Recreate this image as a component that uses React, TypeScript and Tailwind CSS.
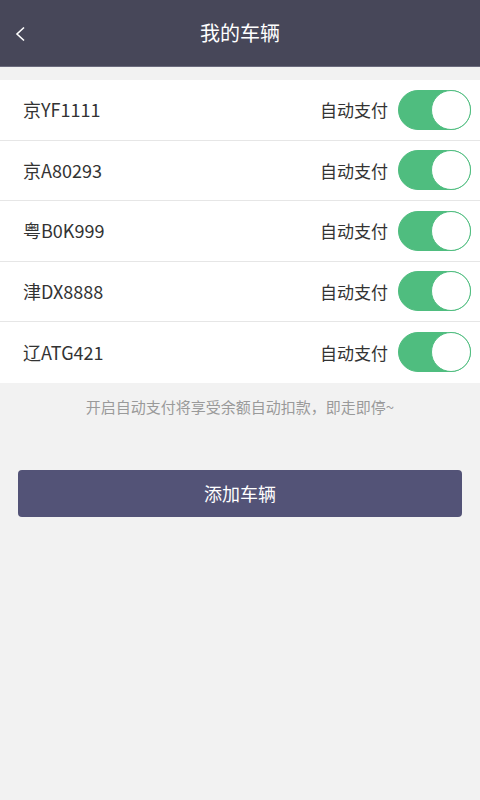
import { useState } from "react";

const plates = ["京YF1111", "京A80293", "粤B0K999", "津DX8888", "辽ATG421"];

const font = {
  fontFamily: '"Noto Sans CJK SC", "Noto Sans", Roboto, sans-serif',
};

const Toggle = ({ on, onClick }: { on: boolean; onClick: () => void }) => (
  <button
    onClick={onClick}
    className={
      "relative w-[73px] h-[40px] rounded-full border " +
      (on ? "bg-[#4fbd7f] border-[#4fbd7f]" : "bg-white border-[#e0e0e0]")
    }
  >
    <span
      className={
        "absolute top-[-1px] w-[40px] h-[40px] rounded-full bg-white border " +
        (on ? "right-[-1px] border-[#4fbd7f]" : "left-[-1px] border-[#e0e0e0]")
      }
    />
  </button>
);

export default function App() {
  const [enabled, setEnabled] = useState(plates.map(() => true));

  return (
    <div className="w-[480px] h-[800px] bg-[#f2f2f2] flex flex-col" style={font}>
      <div className="h-[67px] bg-[#474759] border-b border-[#6b6b7d] flex items-center relative">
        <svg
          className="absolute left-[14px] top-[26px]"
          width="12"
          height="16"
          viewBox="0 0 12 16"
          fill="none"
        >
          <path d="M10 1.5 L3 8 L10 14.5" stroke="#fff" strokeWidth="1.6" />
        </svg>
        <h1 className="w-full text-center text-white text-[20px]">我的车辆</h1>
      </div>

      <div className="mt-[13px] bg-white">
        {plates.map((plate, i) => (
          <div
            key={plate}
            className={
              "h-[60.5px] flex items-center justify-between pl-[23px] pr-[9px] " +
              (i < plates.length - 1 ? "border-b border-[#e6e6e6]" : "")
            }
          >
            <span className="text-[18px] text-[#333]">{plate}</span>
            <div className="flex items-center gap-[10px]">
              <span className="text-[17px] text-[#333]">自动支付</span>
              <Toggle
                on={enabled[i]}
                onClick={() =>
                  setEnabled(enabled.map((v, j) => (j === i ? !v : v)))
                }
              />
            </div>
          </div>
        ))}
      </div>

      <p className="mt-[13px] text-center text-[15px] text-[#9a9a9a]">
        开启自动支付将享受余额自动扣款，即走即停~
      </p>

      <div className="px-[18px] mt-[52px]">
        <button className="w-full h-[47px] rounded-[4px] bg-[#535377] text-white text-[18px]">
          添加车辆
        </button>
      </div>
    </div>
  );
}
